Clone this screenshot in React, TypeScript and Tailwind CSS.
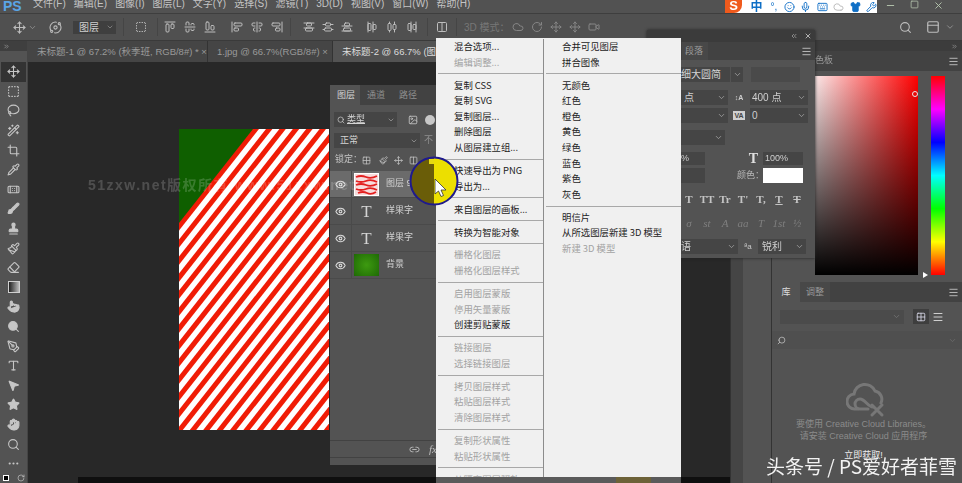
import {
  AlignCenterHorizontal,
  AlignCenterVertical,
  AlignEndHorizontal,
  AlignEndVertical,
  AlignHorizontalDistributeCenter,
  AlignHorizontalDistributeEnd,
  AlignHorizontalDistributeStart,
  AlignStartHorizontal,
  AlignStartVertical,
  AlignVerticalDistributeCenter,
  AlignVerticalDistributeEnd,
  AlignVerticalDistributeStart,
  Bandage,
  Brush,
  ChevronDown,
  ChevronsLeft,
  Cloud,
  Columns2,
  Crop,
  Ellipsis,
  Eraser,
  Eye,
  Grid2x2,
  Hand,
  Image as ImageIcon,
  Keyboard,
  Lasso,
  Link2,
  Menu,
  Mic,
  Minus,
  MousePointer2,
  Move,
  Orbit,
  Paintbrush,
  PanelTop,
  PenTool,
  Pipette,
  Pointer,
  RotateCw,
  Search,
  Shirt,
  Smile,
  Square,
  SquareDashed,
  Stamp,
  Star,
  Type,
  Video,
  WandSparkles,
  Wrench,
  X,
} from "lucide-react";

const menus = ["文件(F)", "编辑(E)", "图像(I)", "图层(L)", "文字(Y)", "选择(S)", "滤镜(T)", "3D(D)", "视图(V)", "窗口(W)", "帮助(H)"];

const tools = [Move, SquareDashed, Lasso, WandSparkles, Crop, Pipette, Bandage, Brush, Stamp, Paintbrush, Eraser, null, Pointer, Search, PenTool, Type, MousePointer2, Star, Hand, Search, Ellipsis];

const filledTools = [7, 8, 12, 13, 16, 17, 18];

const leftMenu = [
  ["混合选项..."], ["编辑调整...", 1], "-",
  ["复制 CSS"], ["复制 SVG"], ["复制图层..."], ["删除图层"], ["从图层建立组..."], "-",
  ["快速导出为 PNG"], ["导出为..."], "-",
  ["来自图层的画板..."], "-",
  ["转换为智能对象"], "-",
  ["栅格化图层", 1], ["栅格化图层样式", 1], "-",
  ["启用图层蒙版", 1], ["停用矢量蒙版", 1], ["创建剪贴蒙版"], "-",
  ["链接图层", 1], ["选择链接图层", 1], "-",
  ["拷贝图层样式", 1], ["粘贴图层样式", 1], ["清除图层样式", 1], "-",
  ["复制形状属性", 1], ["粘贴形状属性", 1], "-",
  ["从隔离图层释放", 1],
] as const;

const rightMenu = [
  ["合并可见图层"], ["拼合图像"], "-",
  ["无颜色"], ["红色"], ["橙色"], ["黄色"], ["绿色"], ["蓝色"], ["紫色"], ["灰色"], "-",
  ["明信片"], ["从所选图层新建 3D 模型"], ["新建 3D 模型", 1],
] as const;

function MenuColumn({ items, className }: { items: readonly (string | readonly (string | number)[])[]; className: string }) {
  return (
    <div className={className}>
      {items.map((item, i) =>
        item === "-" ? (
          <div key={i} className="h-[7.4px] flex items-center">
            <div className="h-px w-full bg-[#a8a8a8]" />
          </div>
        ) : (
          <div
            key={i}
            className={`h-[15.6px] leading-[15.6px] whitespace-pre pl-[16px] ${item[1] ? "text-[#a2a2a2]" : "text-[#1c1c1c]"}`}
          >
            {item[0]}
          </div>
        )
      )}
    </div>
  );
}

function Stripes() {
  const bars = Array.from({ length: 24 }, (_, i) => 80 + i * 13.4);
  return (
    <svg width="150" height="301" viewBox="0 0 150 301" className="block">
      <rect width="150" height="301" fill="#f01c06" />
      {bars.map((x) => (
        <polygon key={x} points={`${x},0 ${x + 7},0 ${x + 7 - 237},301 ${x - 237},301`} fill="#ffffff" />
      ))}
      <polygon points="0,0 74,0 0,94" fill="#0f5f00" />
    </svg>
  );
}

function LayerRow({ active, thumb, name }: { active?: boolean; thumb: "art" | "text" | "bg"; name: string }) {
  return (
    <div className={`h-[27px] flex items-center border-b border-[#4a4a4a] ${active ? "bg-[#6b6b6b]" : ""}`}>
      <div className="w-[22px] h-full flex items-center justify-center border-r border-[#4a4a4a]">
        <Eye size={11} strokeWidth={2.4} className="text-[#d8d8d8]" />
      </div>
      {thumb === "art" && (
        <div className="ml-[2px] w-[25px] h-[23px] border border-white bg-[#f7dcdc] overflow-hidden">
          <svg width="23" height="21" viewBox="0 0 23 21" className="block">
            <path d="M1 3q5-2 10 0t11-1M1 7q5 2 10 0t11 1M1 11q5-2 10 0t11-1M1 15q5 2 10 0t11 1M3 19q5-2 9 0t9-1" fill="none" stroke="#e32020" strokeWidth="1.8" />
          </svg>
        </div>
      )}
      {thumb === "text" && <div className="ml-[2px] w-[25px] text-center font-['Liberation_Serif',serif] text-[17px] leading-none text-[#d4d4d4]">T</div>}
      {thumb === "bg" && <div className="ml-[2px] w-[25px] h-[22px] bg-[radial-gradient(circle,#3d9a10,#1f6a05)]" />}
      <span className="ml-[7px] text-[9px] text-[#d0d0d0]">{name}</span>
    </div>
  );
}

function Select({ className, text, textClass }: { className: string; text?: string; textClass?: string }) {
  return (
    <div className={`h-[15px] bg-[#454545] flex items-center justify-between text-[10px] text-[#cfcfcf] ${className}`}>
      <span className={textClass}>{text}</span>
      <ChevronDown size={9} className="mr-[2px] text-[#a8a8a8]" />
    </div>
  );
}

function CharacterPanel() {
  return (
    <div className="absolute left-[647px] top-[30px] w-[168px] h-[228px] bg-[#535353] shadow-[0_0_3px_#222] flex flex-col">
      <div className="h-[12px] bg-[#3b3b3b] flex items-center justify-end gap-[6px] pr-[3px] text-[#b0b0b0]">
        <ChevronsLeft size={8} />
        <X size={8} strokeWidth={3} />
      </div>
      <div className="h-[18px] bg-[#424242] flex items-center justify-between pr-[3px]">
        <div className="ml-[35px] w-[26px] h-full bg-[#484848] text-[9px] leading-[18px] pl-[3px] text-[#9c9c9c]">段落</div>
        <Menu size={11} className="text-[#c0c0c0]" />
      </div>
      <div className="mt-[7px] flex pl-[3px]">
        <div className="w-[80px] h-[15px] bg-[#454545] pl-[31px] text-[10px] leading-[15px] text-[#d4d4d4]">细大圆简</div>
        <div className="ml-px w-[12px] h-[15px] bg-[#454545] flex items-center justify-center">
          <ChevronDown size={9} className="text-[#a8a8a8]" />
        </div>
        <div className="ml-[8px] w-[49px] h-[15px] bg-[#4a4a4a]" />
      </div>
      <div className="mt-[8px] flex items-center pl-[3px]">
        <Select className="w-[78px]" text="点" textClass="pl-[34px]" />
        <div className="w-[22px] flex justify-center text-[7px] font-bold leading-[7px] text-[#cfcfcf]">↕A</div>
        <Select className="w-[58px]" text="400 点" textClass="pl-[2px]" />
      </div>
      <div className="mt-[3px] flex items-center pl-[3px]">
        <Select className="w-[78px]" />
        <div className="w-[22px] flex justify-center">
          <span className="bg-[#d0d0d0] px-px text-[7px] font-bold leading-[9px] text-[#444]">VA</span>
        </div>
        <Select className="w-[58px]" text="0" textClass="pl-[2px]" />
      </div>
      <div className="mt-[7px] pl-[3px]">
        <Select className="w-[75px]" />
      </div>
      <div className="mt-[7px] flex items-center pl-[3px] h-[13px]">
        <div className="w-[55px] h-[13px] bg-[#454545] pl-[31px] text-[9px] leading-[13px] text-[#cfcfcf]">%</div>
        <div className="w-[58px] flex justify-end pr-[5px] font-['Liberation_Serif',serif] font-bold text-[14px] leading-none text-[#e0e0e0]">T</div>
        <div className="w-[40px] h-[13px] bg-[#454545] pl-[2px] text-[9px] leading-[13px] text-[#cfcfcf]">100%</div>
      </div>
      <div className="mt-[3px] flex items-center pl-[3px] h-[15px]">
        <div className="w-[55px] h-[15px] bg-[#454545]" />
        <div className="w-[58px] pl-[32px] text-[9px] whitespace-nowrap text-[#b8b8b8]">颜色：</div>
        <div className="w-[40px] h-[15px] bg-white" />
      </div>
      <div className="mt-[9px] pl-[33px] flex font-['Liberation_Serif',serif] font-bold text-[11px] leading-[14px] text-[#c4c4c4]">
        {["T", "TT", "Tr", "T'", "T,", "T", "T"].map((t, i) => (
          <span key={i} className={`w-[18px] text-center ${i === 5 ? "underline" : i === 6 ? "line-through" : ""}`}>{t}</span>
        ))}
      </div>
      <div className="mt-[10px] pl-[33px] flex italic font-['Liberation_Serif',serif] text-[11px] leading-[14px] text-[#7f7f7f]">
        {["σ", "st", "A", "aa", "T", "1st", "½"].map((t, i) => (
          <span key={i} className="w-[18px] text-center">{t}</span>
        ))}
      </div>
      <div className="mt-[9px] flex items-center pl-[3px]">
        <Select className="w-[88px]" text="语" textClass="pl-[31px]" />
        <span className="w-[20px] text-center text-[8px] text-[#c8c8c8]">ªa</span>
        <Select className="w-[48px]" text="锐利" textClass="pl-[4px]" />
      </div>
    </div>
  );
}

function LayersPanel() {
  return (
    <div className="absolute left-[330px] top-[85px] w-[110px] h-[380px] bg-[#535353] flex flex-col overflow-hidden">
      <div className="h-[20px] bg-[#424242] flex text-[9px] leading-[20px] text-[#8f8f8f]">
        <div className="w-[30px] bg-[#535353] pl-[7px] text-[#d4d4d4]">图层</div>
        <div className="w-[32px] pl-[7px]">通道</div>
        <div className="pl-[7px]">路径</div>
      </div>
      <div className="mt-[7px] ml-[4px] flex items-center">
        <div className="w-[63px] h-[15px] bg-[#454545] flex items-center justify-between pl-[3px] pr-[2px] text-[9px] text-[#d4d4d4]">
          <span className="flex items-center gap-[2px]">
            <Search size={8} />
            <span className="underline">类型</span>
          </span>
          <ChevronDown size={8} className="text-[#a8a8a8]" />
        </div>
        <ImageIcon size={10} className="ml-[11px] text-[#c8c8c8]" />
        <div className="ml-[7px] w-[10px] h-[10px] rounded-full bg-[#c8c8c8]" />
      </div>
      <div className="mt-[6px] ml-[4px] flex items-center">
        <div className="w-[86px] h-[15px] bg-[#454545] flex items-center justify-between pl-[6px] pr-[2px] text-[9px] text-[#d4d4d4]">
          <span>正常</span>
          <ChevronDown size={8} className="text-[#a8a8a8]" />
        </div>
        <span className="ml-[4px] text-[9px] text-[#8f8f8f]">不</span>
      </div>
      <div className="mt-[5px] h-[14px] ml-[5px] flex items-center text-[9px] text-[#c4c4c4]">
        <span className="w-[27px] whitespace-nowrap">锁定：</span>
        <Grid2x2 size={9} className="mr-[8px]" />
        <Paintbrush size={9} className="mr-[6px]" />
        <Move size={9} className="mr-[6px]" />
        <Columns2 size={9} className="mr-[8px]" />
      </div>
      <div className="mt-[4px] h-[108px]">
        <LayerRow active thumb="art" name="图层 9" />
        <LayerRow thumb="text" name="样果字" />
        <LayerRow thumb="text" name="样果字" />
        <LayerRow thumb="bg" name="背景" />
      </div>
      <div className="mt-[161px] h-[18px] border-y border-[#424242] flex items-center pl-[79px] gap-[9px] text-[#bdbdbd]">
        <Link2 size={11} />
        <span className="font-['Liberation_Serif',serif] italic text-[11px] leading-none">fx</span>
      </div>
    </div>
  );
}

function LayerMenu() {
  return (
    <div className="absolute left-[436px] top-[38px] w-[245px] h-[439px] bg-[#f0f0f0] flex overflow-hidden pt-px text-[9.4px] font-['Noto_Sans_CJK_SC','Liberation_Sans',sans-serif]">
      <MenuColumn items={leftMenu} className="w-[107px] pl-[2px]" />
      <div className="w-px h-full bg-[#8c8c8c]" />
      <MenuColumn items={rightMenu} className="flex-1 pl-[2px]" />
    </div>
  );
}

function CursorHighlight() {
  return (
    <svg width="52" height="52" viewBox="0 0 52 52" className="absolute left-[408px] top-[155px]">
      <path d="M26 2a24 24 0 0 0 0 48z" fill="#6a5d08" />
      <path d="M26 2a24 24 0 0 1 0 48z" fill="#ecdf00" />
      <circle cx="26" cy="26" r="23.5" fill="none" stroke="#1e1a8e" strokeWidth="2" />
      <rect x="21" y="4" width="5" height="5" fill="#e6da10" />
      <path d="M27 24v15l3.5-3 2.5 5.5 2.5-1-2.5-5.5h5z" fill="#ffffff" stroke="#333333" strokeWidth="0.8" />
    </svg>
  );
}

function LibraryCloud() {
  return (
    <svg width="40" height="36" viewBox="0 0 40 36" fill="none" stroke="#777777" strokeWidth="3" strokeLinecap="round">
      <path d="M12 27H9a7.5 7.5 0 0 1-1-15A11 11 0 0 1 29 9a8.5 8.5 0 0 1 6 12" />
      <path d="M22 27h-8a5 5 0 0 1 0-10c5 0 8 8 13 8" />
      <path d="M27 17l10 10M37 17L27 27" transform="translate(-1 6)" />
    </svg>
  );
}

export default function App() {
  return (
    <div className="relative w-[962px] h-[483px] overflow-hidden bg-[#535353] font-['Liberation_Sans','Noto_Sans_CJK_SC',sans-serif]">
      <div className="w-full h-full flex flex-col blur-[0.35px]">
        {/* menu bar */}
        <div className="h-[14px] shrink-0 flex overflow-hidden border-b border-[#3e3e3e] bg-[#525252]">
          <span className="ml-[3px] w-[30px] -mt-[4px] text-[14px] font-bold text-[#5aa5e6]">PS</span>
          <div className="flex gap-[8px] -mt-[3px] text-[10px] leading-[14px] text-[#c4c4c4]">
            {menus.map((m) => (
              <span key={m} className="whitespace-nowrap">{m}</span>
            ))}
          </div>
        </div>

        {/* options bar */}
        <div className="h-[26px] shrink-0 flex items-center text-[#bdbdbd] bg-[#505050]">
          <Move size={13} className="ml-[13px]" />
          <ChevronDown size={9} className="ml-[2px] text-[#999]" />
          <Orbit size={13} className="ml-[12px]" />
          <div className="ml-[11px] w-[43px] h-[13px] bg-[#3f3f3f] flex items-center justify-between pl-[6px] pr-[2px] text-[10px] text-[#d0d0d0]">
            图层
            <ChevronDown size={8} className="text-[#999]" />
          </div>
          <div className="ml-[7px] w-px h-[18px] bg-[#454545]" />
          <SquareDashed size={12} className="ml-[11px]" />
          <div className="ml-[10px] w-px h-[18px] bg-[#454545]" />
          <div className="ml-[6px] flex gap-[8px]">
            <AlignStartHorizontal size={12} />
            <AlignCenterHorizontal size={12} />
            <AlignEndHorizontal size={12} />
          </div>
          <div className="ml-[15px] flex gap-[8px]">
            <AlignStartVertical size={12} />
            <AlignCenterVertical size={12} />
            <AlignEndVertical size={12} />
          </div>
          <div className="ml-[7px] w-px h-[18px] bg-[#454545]" />
          <div className="ml-[12px] flex gap-[7px]">
            <AlignVerticalDistributeStart size={12} />
            <AlignVerticalDistributeCenter size={12} />
            <AlignVerticalDistributeEnd size={12} />
          </div>
          <div className="ml-[13px] flex gap-[8px]">
            <AlignHorizontalDistributeStart size={12} />
            <AlignHorizontalDistributeCenter size={12} />
            <AlignHorizontalDistributeEnd size={12} />
          </div>
          <div className="ml-[9px] w-px h-[18px] bg-[#454545]" />
          <Columns2 size={12} className="ml-[8px]" />
          <div className="ml-[8px] w-px h-[18px] bg-[#454545]" />
          <span className="ml-[7px] w-[42px] whitespace-nowrap text-[10px] text-[#777]">3D 模式：</span>
          <div className="ml-[6px] flex gap-[7px] text-[#858585]">
            <Cloud size={12} />
            <RotateCw size={12} />
            <Move size={12} />
            <Move size={12} />
            <Video size={12} />
          </div>
          <div className="flex-1" />
          <Search size={13} className="mr-[14px]" />
          <PanelTop size={14} className="mr-[5px]" />
          <ChevronDown size={10} className="mr-[7px] text-[#999]" />
        </div>

        <div className="flex-1 flex min-h-0 border-t border-[#3a3a3a]">
          {/* tools */}
          <div className="w-[28px] shrink-0 border-r border-[#454545] flex flex-col">
            <div className="h-[10px] bg-[#3f3f3f] pl-[3px] flex items-center text-[#aaa]">
              <ChevronsLeft size={7} className="rotate-180" />
            </div>
            <div className="h-[11px]" />
            {tools.map((Icon, i) => (
              <div key={i} className={`h-[19.6px] mx-px flex items-center justify-center text-[#c6c6c6] ${i === 0 ? "bg-[#333333]" : ""}`}>
                {Icon ? (
                  <Icon size={13} className={filledTools.includes(i) ? "fill-[#c6c6c6]" : ""} />
                ) : (
                  <div className="w-[12px] h-[12px] border border-[#d0d0d0] bg-[linear-gradient(to_right,#222,#bbb)]" />
                )}
              </div>
            ))}
            <div className="flex items-center pl-[3px] gap-[8px] mt-[1px] text-[#c6c6c6]">
              <div className="w-[6px] h-[6px] bg-black border border-white" />
              <RotateCw size={8} />
            </div>
          </div>

          {/* document area */}
          <div className="flex-1 min-w-0 flex flex-col">
            <div className="h-[21px] shrink-0 flex bg-[#3e3e3e] text-[9.5px] leading-[21px] whitespace-nowrap text-[#9a9a9a]">
              <div className="w-[180px] bg-[#454545] pl-[9px] border-r border-[#333]">未标题-1 @ 67.2% (秋季班, RGB/8#) * ×</div>
              <div className="w-[125px] bg-[#454545] pl-[9px] border-r border-[#333]">1.jpg @ 66.7%(RGB/8#) ×</div>
              <div className="w-[110px] bg-[#535353] pl-[9px] text-[#dcdcdc]">未标题-2 @ 66.7% (图层</div>
            </div>
            <div className="flex-1 bg-[#282828] pl-[151px] pt-[67px] flex flex-col">
              <Stripes />
            </div>
            <div className="h-[6px] shrink-0 bg-[#282828] flex">
              <div className="w-[50px]" />
              <div className="flex-1 bg-[#0f0f0f]" />
            </div>
          </div>

          {/* docked panels */}
          <div className="w-[232px] shrink-0 flex">
            <div className="w-[13px] bg-[#454545] border-l border-[#333]" />
            <div className="w-[29px] bg-[#535353] border-r border-[#333]" />
            <div className="flex-1 flex flex-col">
              <div className="h-[10px] bg-[#3c3c3c] flex justify-end items-center pr-[4px] text-[#aaa]">
                <ChevronsLeft size={7} className="rotate-180" />
              </div>
              <div className="h-[20px] bg-[#424242] flex items-center justify-between pr-[3px] pl-[43px] text-[9px] text-[#9a9a9a]">
                色板
                <Menu size={11} className="text-[#c0c0c0]" />
              </div>
              <div className="h-[211px] bg-[#535353] flex pt-[5px]">
                <div className="ml-[43px] relative w-[103px] h-[199px] bg-[linear-gradient(to_top,#000,transparent),linear-gradient(to_right,#fbe8e8,#f00)]">
                  <div className="absolute right-0 top-[15px] w-[6px] h-[6px] rounded-full border border-[#e8e8e8]" />
                </div>
                <div className="ml-[5px] mt-[196px] w-0 h-0 border-y-[3px] border-y-transparent border-l-[5px] border-l-white" />
                <div className="ml-[3px] w-[14px] h-[199px] bg-[linear-gradient(to_bottom,#f00,#f0f,#00f,#0ff,#0f0,#ff0,#f00)]" />
              </div>
              <div className="h-[20px] bg-[#424242] flex items-center justify-between pr-[3px] text-[9px] text-[#9a9a9a]">
                <div className="flex">
                  <div className="w-[28px] h-[20px] bg-[#535353] leading-[20px] text-center text-[#dcdcdc]">库</div>
                  <div className="w-[30px] h-[20px] bg-[#484848] leading-[20px] text-center">调整</div>
                </div>
                <Menu size={11} className="text-[#c0c0c0]" />
              </div>
              <div className="flex-1 bg-[#535353] flex flex-col">
                <div className="mt-[7px] flex items-center pl-[8px]">
                  <div className="w-[124px] h-[14px] bg-[#4b4b4b] flex items-center justify-end pr-[3px]">
                    <ChevronDown size={9} className="text-[#777]" />
                  </div>
                  <div className="ml-[9px] w-[16px] h-[15px] bg-[#3e3e3e] flex items-center justify-center">
                    <Grid2x2 size={10} className="text-[#d8d8e8]" />
                  </div>
                  <Menu size={12} className="ml-[3px] text-[#cfcfcf]" />
                </div>
                <div className="mt-[7px] h-[18px] bg-[#4f4f4f] flex items-center justify-between px-[5px] text-[#c4c4c4]">
                  <Search size={9} className="-scale-x-100" />
                  <ChevronDown size={9} className="text-[#6e6e6e]" />
                </div>
                <div className="mt-[33px] self-center mr-[2px]">
                  <LibraryCloud />
                </div>
                <div className="text-center text-[9px] leading-[12px] text-[#8b8b8b] pr-[7px] whitespace-nowrap">
                  <div>要使用 Creative Cloud Libraries。</div>
                  <div>请安装 Creative Cloud 应用程序</div>
                  <div className="mt-[7px] text-[#ececec]">立即获取!</div>
                </div>
              </div>
            </div>
          </div>
        </div>

        {/* floating windows */}
        <span className="absolute left-[88px] top-[175px] text-[14px] font-bold tracking-[1.5px] whitespace-nowrap text-[#ffffff] opacity-[0.18] z-10">
          51zxw.net版权所有 www.51zxw.net
        </span>
        <LayersPanel />
        <CharacterPanel />
        <LayerMenu />
        <CursorHighlight />
        <div className="absolute left-[436px] top-[477px] w-[245px] h-[6px] bg-[#5a5a5a]">
          <div className="ml-[180px] w-[35px] h-[6px] bg-[#6d6238]" />
        </div>

        {/* ime bar */}
        <div className="absolute left-[725px] top-0 w-[152px] h-[13px] bg-white flex items-center overflow-hidden text-[#0f6fc6]">
          <div className="w-[19px] h-[13px] bg-[#f05a1c] rounded-br-[8px] text-white text-[13px] font-bold leading-[11px] text-center">S</div>
          <span className="ml-[8px] text-[12px] leading-[10px] font-bold">中</span>
          <span className="ml-[8px] text-[10px] leading-[8px]">°,</span>
          <Smile size={12} className="ml-[7px]" />
          <Mic size={12} className="ml-[5px]" />
          <Keyboard size={12} className="ml-[6px]" />
          <Cloud size={12} className="ml-[5px] text-[#b8b8b8]" />
          <Shirt size={12} fill="#0f6fc6" className="ml-[6px]" />
          <Wrench size={12} className="ml-[5px]" />
        </div>
        <div className="absolute left-[885px] top-0 flex gap-[14px] text-[#b8c8b0]">
          <Minus size={11} />
          <Square size={9} />
          <X size={11} />
        </div>
      </div>

      {/* watermark */}
      <span className="absolute left-[766px] top-[453px] text-[19px] leading-[26px] whitespace-nowrap text-[#f2f2f2] font-['Noto_Sans_CJK_SC',sans-serif]">
        头条号 / PS爱好者菲雪
      </span>
    </div>
  );
}
